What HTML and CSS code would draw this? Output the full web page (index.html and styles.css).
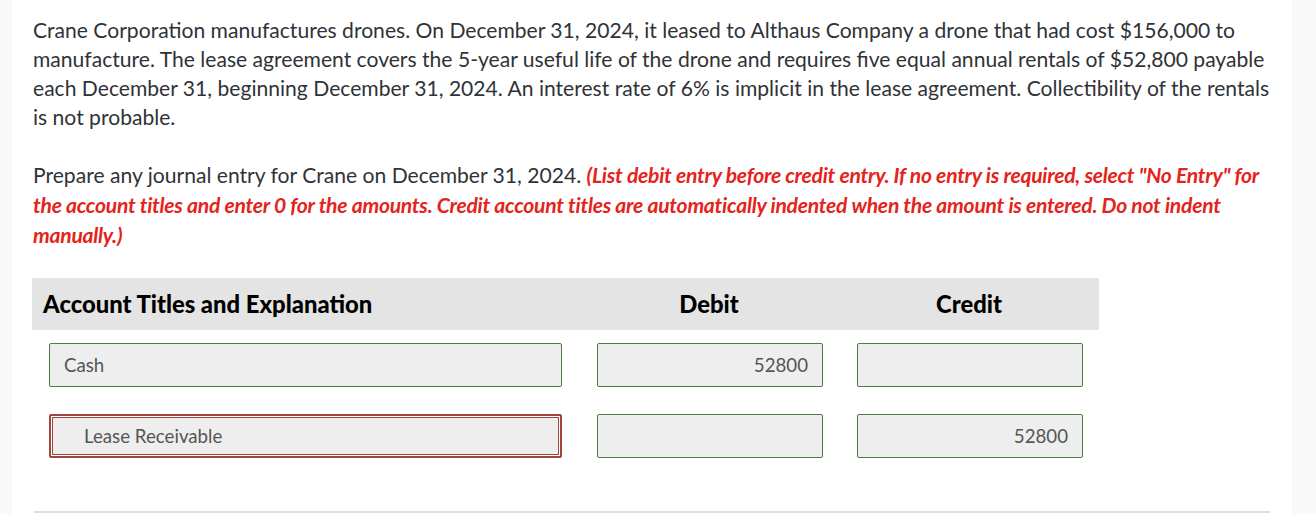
FILE: index.html
```html
<!DOCTYPE html>
<html>
<head>
<meta charset="utf-8">
<link rel="stylesheet" href="styles.css">
</head>
<body>
<div class="page">
  <main class="content">
    <p class="para">Crane Corporation manufactures drones. On December 31, 2024, it leased to Althaus Company a drone that had cost $156,000 to manufacture. The lease agreement covers the 5-year useful life of the drone and requires five equal annual rentals of $52,800 payable each December 31, beginning December 31, 2024. An interest rate of 6% is implicit in the lease agreement. Collectibility of the rentals is not probable.</p>
    <p class="para">Prepare any journal entry for Crane on December 31, 2024. <span class="note">(List debit entry before credit entry. If no entry is required, select "No Entry" for the account titles and enter 0 for the amounts. Credit account titles are automatically indented when the amount is entered. Do not indent manually.)</span></p>

    <div class="journal">
      <div class="head head-account">Account Titles and Explanation</div>
      <div class="head head-amount">Debit</div>
      <div class="head head-amount">Credit</div>

      <div class="cell cell-account"><div class="field">Cash</div></div>
      <div class="cell cell-amount"><div class="field num">52800</div></div>
      <div class="cell cell-amount"><div class="field num"></div></div>

      <div class="cell cell-account"><div class="field field-error indented">Lease Receivable</div></div>
      <div class="cell cell-amount"><div class="field num"></div></div>
      <div class="cell cell-amount"><div class="field num">52800</div></div>
    </div>

    <div class="rule"></div>
  </main>
</div>
</body>
</html>
```

FILE: styles.css
```css
html, body {
  margin: 0;
  padding: 0;
}
body {
  background: #f9f9f9;
  font-family: Lato, "Open Sans", sans-serif;
  color: #2d3436;
}
.page {
  width: 1316px;
  height: 514px;
  overflow: hidden;
  padding-left: 12px;
  box-sizing: border-box;
}
.content {
  width: 1280px;
  height: 514px;
  background: #ffffff;
  box-sizing: border-box;
  padding: 15px 22px 0 21px;
}
.para {
  margin: 0 0 29px 0;
  font-size: 21.1px;
  line-height: 29px;
  color: #2f3338;
}
.para + .para {
  line-height: 30px;
  margin-bottom: 28px;
}
.note {
  color: #e4231b;
  font-weight: 700;
  font-style: italic;
  letter-spacing: -0.25px;
}
.journal {
  display: grid;
  grid-template-columns: 547px 260px 260px;
  margin-left: -1px;
}
.head {
  background: #e4e4e4;
  height: 52px;
  display: flex;
  align-items: center;
  font-size: 23.8px;
  font-weight: 900;
  color: #000;
}
.head-account {
  padding-left: 11px;
}
.head-amount {
  justify-content: center;
}
.cell {
  height: 71px;
  box-sizing: border-box;
  padding-top: 13px;
}
.cell-account {
  padding-left: 17px;
  padding-right: 17px;
}
.cell-amount {
  padding-left: 18px;
  padding-right: 16px;
}
.field {
  height: 44px;
  box-sizing: border-box;
  border: 1px solid #4b7b3d;
  border-radius: 2px;
  background: #eeeeee;
  display: flex;
  align-items: center;
  padding: 0 14px 0 14px;
  font-size: 18.7px;
  color: #555;
}
.num {
  justify-content: flex-end;
}
.field-error {
  border: 2px solid #a0463f;
  box-shadow: inset 0 0 0 1px #ffffff, inset 0 0 0 2px #a0463f;
}
.indented {
  padding-left: 33px;
}
.rule {
  margin-top: 39px;
  margin-left: 1px;
  width: 1236px;
  height: 2px;
  background: #dddddd;
}
```
